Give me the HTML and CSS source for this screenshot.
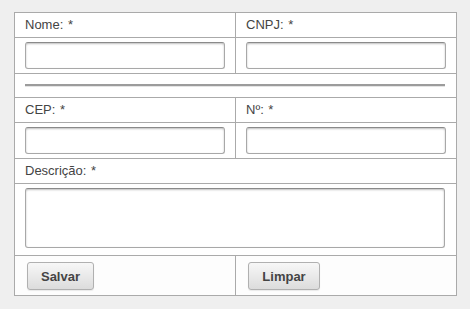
FILE: index.html
```html
<!DOCTYPE html>
<html>
<head>
<meta charset="utf-8">
<link rel="stylesheet" href="styles.css">
</head>
<body>
<form class="form">
<table class="grid">
  <tr class="label-row">
    <td class="cell">Nome: *</td>
    <td class="cell">CNPJ: *</td>
  </tr>
  <tr class="input-row">
    <td class="cell"><input class="field" type="text"></td>
    <td class="cell"><input class="field" type="text"></td>
  </tr>
  <tr class="sep-row">
    <td class="cell" colspan="2"><div class="sep"></div></td>
  </tr>
  <tr class="label-row">
    <td class="cell">CEP: *</td>
    <td class="cell">Nº: *</td>
  </tr>
  <tr class="input-row">
    <td class="cell"><input class="field" type="text"></td>
    <td class="cell"><input class="field" type="text"></td>
  </tr>
  <tr class="label-row">
    <td class="cell" colspan="2">Descrição: *</td>
  </tr>
  <tr class="area-row">
    <td class="cell" colspan="2"><textarea class="area"></textarea></td>
  </tr>
  <tr class="btn-row">
    <td class="cell"><button class="btn btn-save" type="button">Salvar</button></td>
    <td class="cell"><button class="btn btn-clear" type="button">Limpar</button></td>
  </tr>
</table>
</form>
</body>
</html>
```
FILE: styles.css
```css
html, body {
  margin: 0;
  padding: 0;
  background: #efefef;
}
body {
  font-family: "Liberation Sans", Arial, sans-serif;
  font-size: 13px;
  color: #444;
}
.form {
  padding: 12px 0 0 14px;
}
.grid {
  border-collapse: collapse;
  background: #fff;
  table-layout: fixed;
  width: 443px;
}
.cell {
  border: 1px solid #aaa;
  padding: 0 10px;
  width: 200px;
  vertical-align: middle;
}
.label-row .cell {
  height: 24px;
  line-height: 24px;
  padding-top: 0;
  padding-bottom: 0;
  word-spacing: 1px;
}
.input-row .cell {
  height: 35px;
  padding-top: 4px;
  padding-bottom: 4px;
  vertical-align: top;
  box-sizing: border-box;
}
.field {
  display: block;
  box-sizing: border-box;
  width: 200px;
  height: 27px;
  margin: 0;
  border: 1px solid #a8a8a8;
  border-top-color: #8a8a8a;
  border-radius: 3px;
  box-shadow: inset 0 1px 2px rgba(0,0,0,0.25);
  background: #fff;
}
.sep-row .cell {
  height: 23px;
  padding: 0 10px;
}
.sep {
  height: 0;
  border-top: 2px solid #9c9c9c;
  border-bottom: 1px solid #e4e4e4;
  width: 420px;
}
.area-row .cell {
  height: 67px;
  padding: 4px 10px 0;
  vertical-align: top;
}
.area {
  display: block;
  box-sizing: border-box;
  width: 420px;
  height: 60px;
  margin: 0;
  border: 1px solid #a8a8a8;
  border-top-color: #8a8a8a;
  border-radius: 3px;
  box-shadow: inset 0 1px 2px rgba(0,0,0,0.25);
  resize: none;
  background: #fff;
}
.btn-row .cell {
  height: 33px;
  padding: 6px 10px 0 12px;
  vertical-align: top;
  background: #fdfdfd;
}
.btn {
  display: block;
  box-sizing: border-box;
  height: 28px;
  margin: 0;
  padding: 0;
  border: 1px solid #b0b0b0;
  border-radius: 3px;
  background: linear-gradient(#f7f7f7, #dcdcdc);
  font-family: "Liberation Sans", Arial, sans-serif;
  font-size: 13px;
  font-weight: bold;
  color: #444;
  box-shadow: 0 1px 1px rgba(0,0,0,0.08);
}
.btn-save {
  width: 67px;
}
.btn-clear {
  width: 72px;
}
```
